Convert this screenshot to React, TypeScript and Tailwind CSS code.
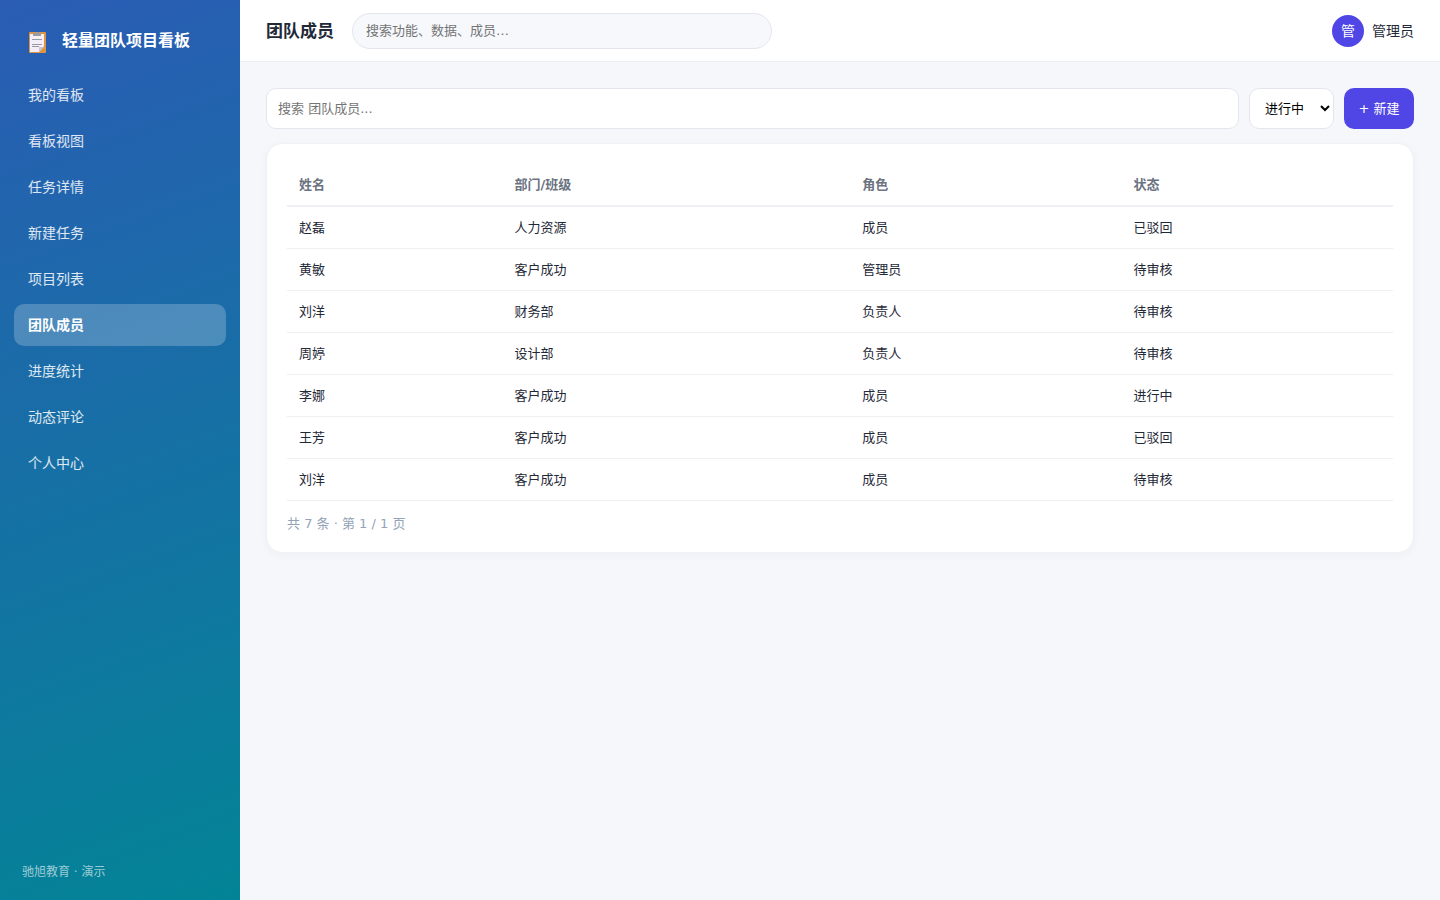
import React from 'react'

const navItems = [
    '我的看板',
    '看板视图',
    '任务详情',
    '新建任务',
    '项目列表',
    '团队成员',
    '进度统计',
    '动态评论',
    '个人中心',
]

const columns = ['姓名', '部门/班级', '角色', '状态']

const members = [
    ['赵磊', '人力资源', '成员', '已驳回'],
    ['黄敏', '客户成功', '管理员', '待审核'],
    ['刘洋', '财务部', '负责人', '待审核'],
    ['周婷', '设计部', '负责人', '待审核'],
    ['李娜', '客户成功', '成员', '进行中'],
    ['王芳', '客户成功', '成员', '已驳回'],
    ['刘洋', '客户成功', '成员', '待审核'],
]

const ClipboardIcon = () => (
    <svg width="20" height="22" viewBox="0 0 20 22" aria-hidden="true">
        <rect x="1" y="1" width="17" height="21" rx="1" fill="#e0943f" />
        <path d="M2 3h14v12l-5 6H2z" fill="#f4eef8" />
        <path d="M11 21v-5h5z" fill="#c9c3dc" />
        <path d="M5 2h3V1h3v1h2v3H5z" fill="#9b9b9f" />
        <path d="M4 8.5h10M4 13.5h10M4 15.5h7" stroke="#9a99a0" />
    </svg>
)

const Sidebar = () => (
    <aside className="w-60 shrink-0 flex flex-col px-3.5 bg-[linear-gradient(160deg,#2a5cb4,#038496)] text-white">
        <div className="flex items-end gap-3.5 px-3.5 pt-[29px] pb-[21px]">
            <ClipboardIcon />
            <span className="text-base leading-6 font-bold">轻量团队项目看板</span>
        </div>
        <nav className="flex flex-col gap-1">
            {navItems.map((item) => (
                <a
                    key={item}
                    href="#"
                    className={
                        item === '团队成员'
                            ? 'rounded-[10px] px-3.5 py-[11px] text-sm leading-5 font-bold bg-white/22'
                            : 'rounded-[10px] px-3.5 py-[11px] text-sm leading-5 text-white/85'
                    }
                >
                    {item}
                </a>
            ))}
        </nav>
        <p className="mt-auto px-2 pb-5 text-xs leading-4 text-white/60">驰旭教育 · 演示</p>
    </aside>
)

const TopBar = () => (
    <header className="flex h-[62px] items-center gap-[18px] border-b border-[#eceef3] bg-white px-[26px]">
        <h1 className="text-[17px] leading-6 font-bold">团队成员</h1>
        <input
            type="search"
            aria-label="搜索功能"
            placeholder="搜索功能、数据、成员…"
            className="h-9 w-[420px] rounded-full border border-[#e4e6ef] bg-[#f6f8fc] px-[13px] text-[13px] outline-none placeholder:text-[#757575]"
        />
        <div className="ml-auto flex items-center gap-2 text-sm">
            <span className="flex size-8 items-center justify-center rounded-full bg-[#4f46e5] text-white">管</span>
            <span>管理员</span>
        </div>
    </header>
)

const Toolbar = () => (
    <div className="flex gap-2.5 text-[13px]">
        <input
            type="text"
            aria-label="搜索 团队成员"
            placeholder="搜索 团队成员..."
            className="h-[41px] min-w-0 flex-1 rounded-[10px] border border-[#e4e6ef] bg-white px-[11px] outline-none placeholder:text-[#757575]"
        />
        <select
            aria-label="状态"
            defaultValue="进行中"
            className="w-[85px] rounded-[10px] border border-[#e4e6ef] bg-white px-[11px] text-black"
        >
            <option>进行中</option>
            <option>待审核</option>
            <option>已驳回</option>
        </select>
        <button type="button" className="w-[70px] rounded-[10px] bg-[#4f46e5] text-white">
            + 新建
        </button>
    </div>
)

const MemberTable = () => (
    <section className="mt-3.5 rounded-2xl border border-[#f0f1f6] bg-white px-5 pt-5 pb-[18px] shadow-[0_2px_8px_rgba(30,40,80,0.04)]">
        <table className="w-full border-collapse text-left text-[13px] leading-5">
            <thead>
                <tr className="border-b-2 border-[#eef0f5] text-[#6b7280]">
                    {columns.map((name) => (
                        <th key={name} className="px-3 pt-[11px] pb-2.5 font-bold">{name}</th>
                    ))}
                </tr>
            </thead>
            <tbody>
                {members.map((row, i) => (
                    <tr key={i} className="border-b border-[#eeeff2]">
                        {row.map((cell, j) => (
                            <td key={j} className="px-3 pt-[11px] pb-2.5">{cell}</td>
                        ))}
                    </tr>
                ))}
            </tbody>
        </table>
        <p className="mt-[13px] text-[13px] leading-5 text-[#94a3b8]">共 7 条 · 第 1 / 1 页</p>
    </section>
)

const App = () => {
    return (
        <div className="flex min-h-screen bg-[#f5f7fb] text-[#1f2937] font-['DejaVu_Sans','Noto_Sans_CJK_SC',sans-serif]">
            <Sidebar />
            <div className="flex min-w-0 flex-1 flex-col">
                <TopBar />
                <main className="p-[26px]">
                    <Toolbar />
                    <MemberTable />
                </main>
            </div>
        </div>
    )
}

export default App
